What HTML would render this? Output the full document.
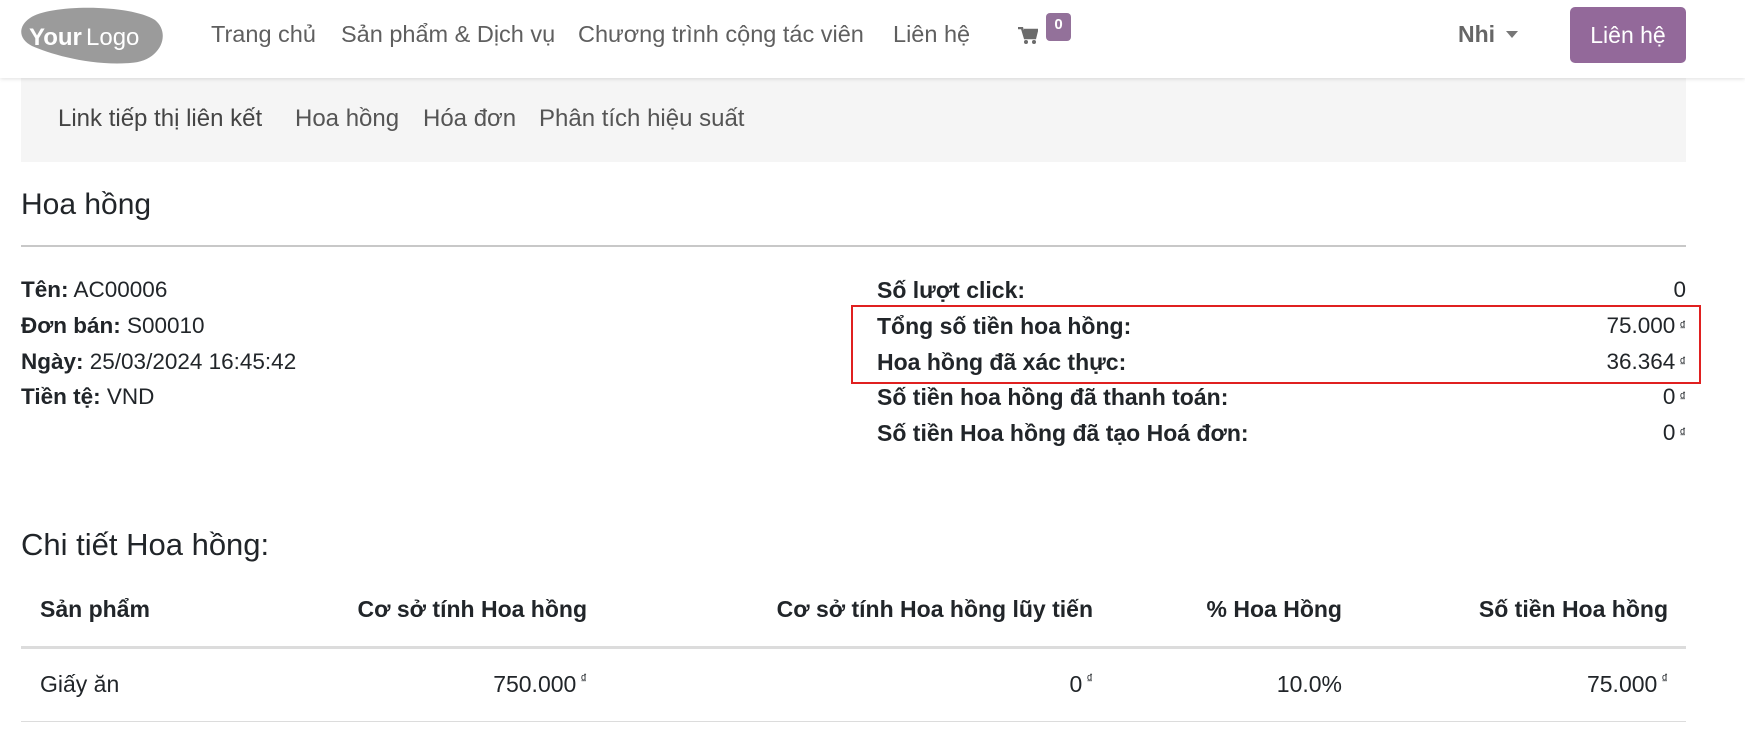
<!DOCTYPE html>
<html><head><meta charset="utf-8"><style>
*{margin:0;padding:0;box-sizing:border-box}
body{width:1745px;height:734px;background:#fff;font-family:"Liberation Sans",sans-serif;color:#212529;position:relative;overflow:hidden}
.a{position:absolute;white-space:nowrap}
.nav{position:absolute;left:0;top:0;width:1745px;height:78px;background:#fff;box-shadow:0 1px 4px rgba(0,0,0,.12);z-index:2}
.nl{font-size:23.5px;color:#5f5f5f;top:21px}
.sub{position:absolute;left:21px;top:78px;width:1665px;height:84px;background:#f5f5f5}
.sl{font-size:24px;top:105px;color:#555}
.lt{font-size:23px;line-height:26px}
.lv{font-size:22.5px;line-height:26px}
.c{font-size:13px;vertical-align:top;margin-left:4px}
.th{font-size:23px;font-weight:bold;top:596px}
.td{font-size:23px;top:671px}
</style></head><body>
<div class="nav">
 <svg class="a" style="left:20px;top:6px" width="146" height="59" viewBox="0 0 146 59"><path d="M10 12 C30 -2 110 -2 135 14 C152 28 140 56 110 57 C70 60 30 48 12 40 C-2 33 -2 20 10 12Z" fill="#9b9b9b"/><text x="9" y="39" font-family="Liberation Sans" font-weight="bold" font-size="24" fill="#fff">Your</text><text x="66" y="39" font-family="Liberation Sans" font-size="24" fill="#fff">Logo</text></svg>
 <div class="a nl" style="left:211px">Trang chủ</div>
 <div class="a nl" style="left:341px">Sản phẩm &amp; Dịch vụ</div>
 <div class="a nl" style="left:578px">Chương trình cộng tác viên</div>
 <div class="a nl" style="left:893px">Liên hệ</div>
 <svg class="a" style="left:1018px;top:27px" width="20" height="18" viewBox="0 0 20 18"><path d="M0 1h4l3 10h10l2-8H6" fill="none" stroke="#6b6b6b" stroke-width="2.5"/><rect x="6" y="3" width="12" height="7" fill="#6b6b6b"/><circle cx="8" cy="15" r="2" fill="#6b6b6b"/><circle cx="16" cy="15" r="2" fill="#6b6b6b"/></svg>
 <div class="a" style="left:1046px;top:13px;width:25px;height:28px;background:#93719a;border-radius:4px;color:#fff;font-size:15px;font-weight:bold;text-align:center;line-height:24px">0</div>
 <div class="a" style="left:1458px;top:21px;font-size:23px;font-weight:bold;color:#666">Nhi</div>
 <div class="a" style="left:1506px;top:31px;width:0;height:0;border-left:6px solid transparent;border-right:6px solid transparent;border-top:7px solid #777"></div>
 <div class="a" style="left:1570px;top:7px;width:116px;height:56px;background:#93699a;border-radius:5px;color:#fff;font-size:23px;text-align:center;line-height:56px">Liên hệ</div>
</div>
<div class="sub"></div>
<div class="a sl" style="left:58px;color:#444">Link tiếp thị liên kết</div>
<div class="a sl" style="left:295px">Hoa hồng</div>
<div class="a sl" style="left:423px">Hóa đơn</div>
<div class="a sl" style="left:539px">Phân tích hiệu suất</div>

<div class="a" style="left:21px;top:188px;font-size:30px">Hoa hồng</div>
<div class="a" style="left:21px;top:245px;width:1665px;height:2px;background:#c8c8c8"></div>

<div class="a lv" style="left:21px;top:277px"><b>Tên:</b> AC00006</div>
<div class="a lv" style="left:21px;top:313px"><b>Đơn bán:</b> S00010</div>
<div class="a lv" style="left:21px;top:349px"><b>Ngày:</b> 25/03/2024 16:45:42</div>
<div class="a lv" style="left:21px;top:384px"><b>Tiền tệ:</b> VND</div>

<div class="a lt" style="left:877px;top:277px;font-weight:bold">Số lượt click:</div>
<div class="a lv" style="right:59px;top:277px">0</div>
<div class="a lt" style="left:877px;top:313px;font-weight:bold">Tổng số tiền hoa hồng:</div>
<div class="a lv" style="right:59px;top:313px">75.000<span class="c">₫</span></div>
<div class="a lt" style="left:877px;top:349px;font-weight:bold">Hoa hồng đã xác thực:</div>
<div class="a lv" style="right:59px;top:349px">36.364<span class="c">₫</span></div>
<div class="a lt" style="left:877px;top:384px;font-weight:bold">Số tiền hoa hồng đã thanh toán:</div>
<div class="a lv" style="right:59px;top:384px">0<span class="c">₫</span></div>
<div class="a lt" style="left:877px;top:420px;font-weight:bold">Số tiền Hoa hồng đã tạo Hoá đơn:</div>
<div class="a lv" style="right:59px;top:420px">0<span class="c">₫</span></div>
<div class="a" style="left:851px;top:305px;width:850px;height:79px;border:2px solid #e02020"></div>

<div class="a" style="left:21px;top:527px;font-size:31px">Chi tiết Hoa hồng:</div>
<div class="a th" style="left:40px">Sản phẩm</div>
<div class="a th" style="left:0;width:587px;text-align:right">Cơ sở tính Hoa hồng</div>
<div class="a th" style="left:0;width:1093px;text-align:right">Cơ sở tính Hoa hồng lũy tiến</div>
<div class="a th" style="left:0;width:1342px;text-align:right">% Hoa Hồng</div>
<div class="a th" style="left:0;width:1668px;text-align:right">Số tiền Hoa hồng</div>
<div class="a" style="left:21px;top:646px;width:1665px;height:3px;background:#dcdcdc"></div>
<div class="a td" style="left:40px">Giấy ăn</div>
<div class="a td" style="left:0;width:587px;text-align:right">750.000<span class="c">₫</span></div>
<div class="a td" style="left:0;width:1093px;text-align:right">0<span class="c">₫</span></div>
<div class="a td" style="left:0;width:1342px;text-align:right">10.0%</div>
<div class="a td" style="left:0;width:1668px;text-align:right">75.000<span class="c">₫</span></div>
<div class="a" style="left:21px;top:721px;width:1665px;height:1px;background:#dcdcdc"></div>
</body></html>
